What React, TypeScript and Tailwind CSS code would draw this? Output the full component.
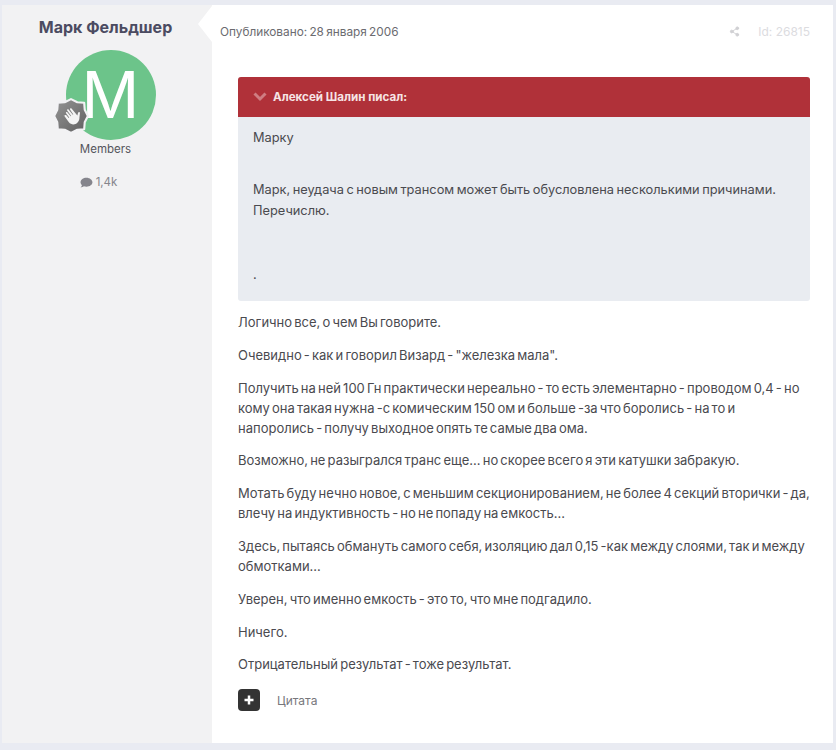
import { Share2 } from "lucide-react";

const paragraphs = [
  "Логично все, о чем Вы говорите.",
  'Очевидно - как и говорил Визард - "железка мала".',
  "Получить на ней 100 Гн практически нереально - то есть элементарно - проводом 0,4 - но кому она такая нужна -с комическим 150 ом и больше -за что боролись - на то и напоролись - получу выходное опять те самые два ома.",
  "Возможно, не разыгрался транс еще... но скорее всего я эти катушки забракую.",
  "Мотать буду нечно новое, с меньшим секционированием, не более 4 секций вторички - да, влечу на индуктивность - но не попаду на емкость...",
  "Здесь, пытаясь обмануть самого себя, изоляцию дал 0,15 -как между слоями, так и между обмотками...",
  "Уверен, что именно емкость - это то, что мне подгадило.",
  "Ничего.",
  "Отрицательный результат - тоже результат.",
];

const RankBadge = () => (
  <svg viewBox="0 0 36 36" className="absolute left-[-13.5px] top-[47px] h-[38px] w-[38px]">
    <defs>
      <linearGradient id="rank" x1="0" y1="0" x2="1" y2="1">
        <stop offset="0" stopColor="#959595" />
        <stop offset="1" stopColor="#5f5f5f" />
      </linearGradient>
    </defs>
    <polygon
      points="18,2 24,5 30.5,5.5 31,12 34,18 31,24 30.5,30.5 24,31 18,34 12,31 5.500,30.500 5,24 2,18 5,12 5.500,5.500 12,5"
      fill="url(#rank)"
      stroke="#f2f2f4"
      strokeWidth="2"
      strokeLinejoin="round"
    />
    {/* waving hand */}
    <path
      d="M11 17l5 7c2 2.500 6 2.500 8 0.500 1.500-1.500 2-3 2-5l0.500-4.500c0-1-1.500-1.200-1.800 0l-0.700 2.500-5.500-6.500c-0.700-0.800-1.900 0-1.300 1l3 4.500-0.500 0.400-4-5c-0.700-0.800-1.900 0-1.300 1l3.800 5-0.500 0.400-3.200-3.800c-0.700-0.800-1.800 0-1.200 1l3 4-0.500 0.400-2.200-2.500c-0.700-0.800-1.900 0-1.100 0.600z"
      fill="#f4f4f4"
    />
  </svg>
);

const App = () => {
  return (
    <div
      className="h-[750px] w-[836px] overflow-hidden bg-[#e9ebf2] pb-[7px] pl-[2px] pr-[3px] pt-[5px] text-[13px] leading-[21px] text-[#4a4a4f]"
      style={{ fontFamily: "Inter, 'Noto Sans', sans-serif" }}
    >
      <div className="flex h-full bg-white">
        {/* Author column */}
        <aside className="flex w-[210px] shrink-0 flex-col items-center bg-[#f2f2f3]">
          <h3 className="mr-[3px] mt-[11px] text-[16px] font-bold leading-[22px] text-[#4b4b61]">
            Марк Фельдшер
          </h3>
          <div className="relative ml-[7px] mt-[12px] flex h-[90px] w-[90px] items-center justify-center rounded-full bg-[#6cc48a]">
            <span className="text-[64px] font-normal leading-none text-white">M</span>
            <RankBadge />
          </div>
          <div className="mr-[3px] text-[11.500px] leading-[18px] text-[#55555c]">Members</div>
          <div className="mr-[17px] mt-[15px] flex items-center gap-[3px] text-[11.500px] leading-[18px] text-[#85858c]">
            <svg viewBox="0 0 24 24" className="h-[13px] w-[13px]" fill="#85858c">
              <path d="M12 3C5.900 3 1 6.800 1 11.500c0 2.100 1 4 2.600 5.500-.4 1.600-1.400 3-2.600 4 2.300 0 4.500-.8 6.100-2.100 1.500.5 3.200.8 4.900.8 6.100 0 11-3.800 11-8.200S18.100 3 12 3z" />
            </svg>
            <span>1,4k</span>
          </div>
        </aside>

        {/* Post */}
        <main className="relative flex-1 pl-[26px] pr-[23px] [word-spacing:-1.500px]">
          <div className="absolute left-[-14px] top-[1px] h-0 w-0 border-y-[18px] border-r-[14px] border-y-transparent border-r-white" />
          <div className="flex h-[72px] items-start justify-between pt-[16px]">
            <span className="ml-[-18px] mt-[1px] text-[11.800px] leading-[21px] text-[#6b6b70] [word-spacing:-1px]">
              Опубликовано: 28 января 2006
            </span>
            <div className="flex items-center gap-[18px] text-[12px] leading-[21px] text-[#dcdcdf] [word-spacing:0px]">
              <Share2 size={11} fill="#d0d0d3" strokeWidth={2} className="text-[#d0d0d3]" />
              <span>Id: 26815</span>
            </div>
          </div>

          <blockquote className="overflow-hidden rounded-[3px] bg-[#e9ecf1]">
            <div className="flex h-[40px] items-center gap-[6px] bg-[#b03139] pl-[15px] text-[11.600px] font-bold text-[#f6e4e5] [word-spacing:0px]">
              <svg viewBox="0 0 14 10" className="h-[10px] w-[14px]" fill="none" stroke="#cf7d82" strokeWidth="3">
                <path d="M1.500 1.500L7 7l5.500-5.500" />
              </svg>
              <span>Алексей Шалин писал:</span>
            </div>
            <div className="h-[184px] px-[15px] pt-[10px] text-[12.800px] [word-spacing:-1.100px]">
              <p>Марку</p>
              <p className="mt-[31px]">
                Марк, неудача с новым трансом может быть обусловлена несколькими причинами. Перечислю.
              </p>
              <p className="mt-[43px]">.</p>
            </div>
          </blockquote>

          <div className="mt-[11px] flex flex-col gap-[12.800px] leading-[20px]">
            {paragraphs.map((text, i) => (
              <p key={i}>{text}</p>
            ))}
          </div>

          <div className="mt-[15px] flex items-center gap-[17px]">
            <div className="flex h-[22px] w-[22px] items-center justify-center rounded-[4px] bg-[#333333]">
              <svg viewBox="0 0 10 10" className="h-[10px] w-[10px]" fill="none" stroke="#ffffff" strokeWidth="2.500">
                <path d="M5 0.500v9M0.500 5h9" />
              </svg>
            </div>
            <span className="mt-[1px] text-[12px] text-[#77777c] [word-spacing:0px]">Цитата</span>
          </div>
        </main>
      </div>
    </div>
  );
};

export default App;
